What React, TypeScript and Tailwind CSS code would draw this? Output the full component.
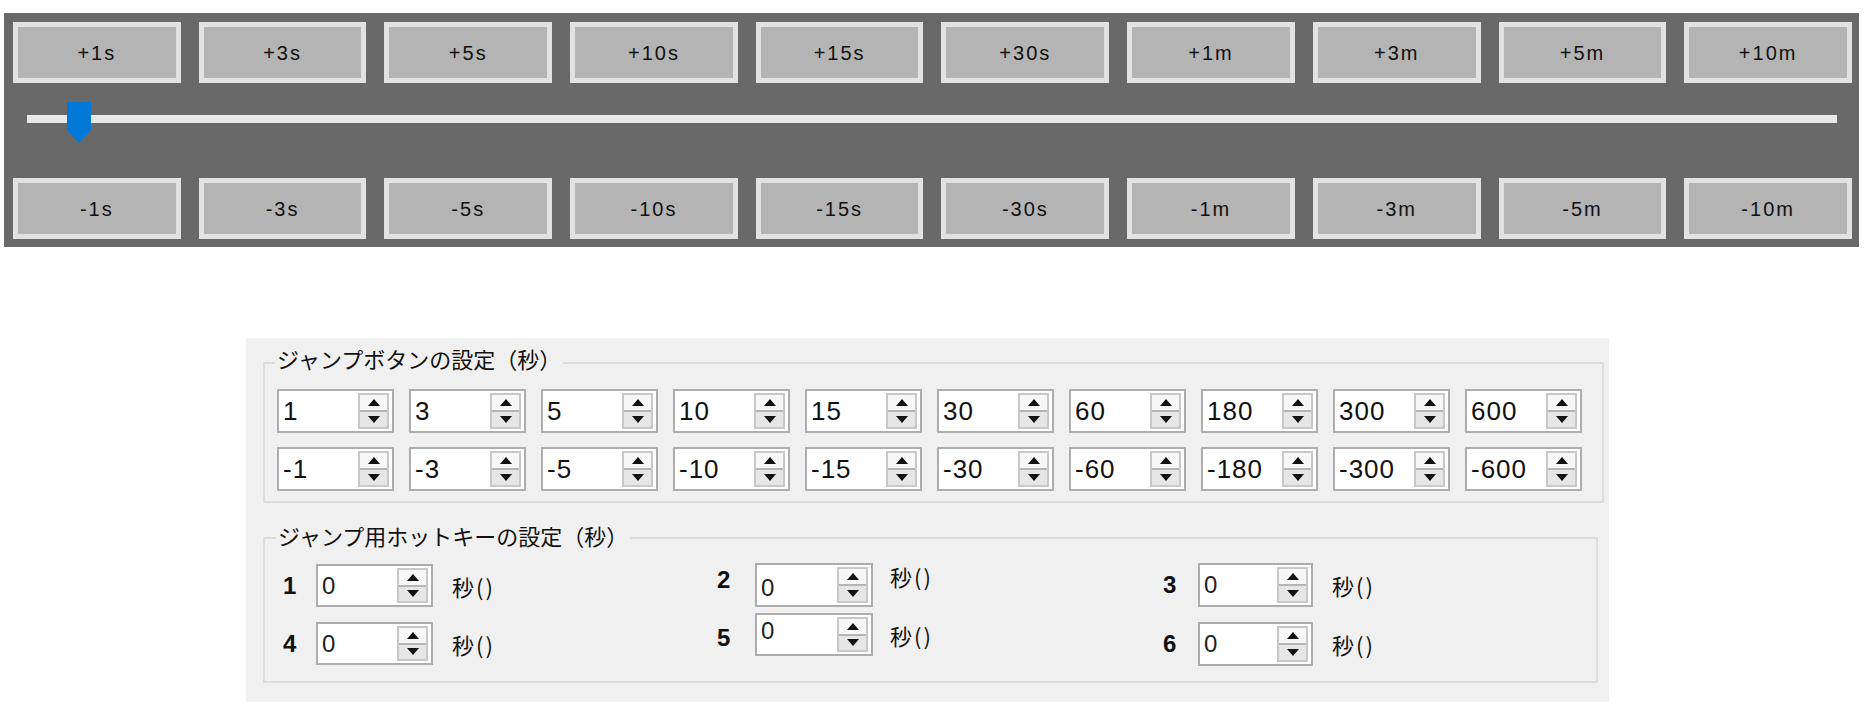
import React from "react";

const plus = ["+1s", "+3s", "+5s", "+10s", "+15s", "+30s", "+1m", "+3m", "+5m", "+10m"];
const minus = ["-1s", "-3s", "-5s", "-10s", "-15s", "-30s", "-1m", "-3m", "-5m", "-10m"];
const row1 = ["1", "3", "5", "10", "15", "30", "60", "180", "300", "600"];
const row2 = ["-1", "-3", "-5", "-10", "-15", "-30", "-60", "-180", "-300", "-600"];

const FONT = { fontFamily: '"Liberation Sans", "Noto Sans CJK JP", sans-serif' };
const JP = { fontFamily: '"Noto Sans CJK JP", "Liberation Sans", sans-serif' };

function JumpButton({ label }: { label: string }) {
  return (
    <div className="h-[61px] border-[5px] border-[#e2e2e2] bg-[#b4b4b4] flex items-center justify-center text-[20px] tracking-[2px] text-[#111] leading-none">
      {label}
    </div>
  );
}

function Arrow({ up }: { up?: boolean }) {
  return (
    <svg width="12" height="7" viewBox="0 0 12 7">
      {up ? <path d="M0 7 L6 0 L12 7 Z" fill="#111" /> : <path d="M0 0 L6 7 L12 0 Z" fill="#111" />}
    </svg>
  );
}

function Spinner({ cls }: { cls: string }) {
  return (
    <div className={"flex flex-col border-2 border-[#c8c8c8] " + cls}>
      <div className="flex-1 flex items-center justify-center bg-[#f7f7f7]">
        <Arrow up />
      </div>
      <div className="h-[2px] bg-[#b5b5b5]" />
      <div className="flex-1 flex items-center justify-center bg-[#e6e6e6]">
        <Arrow />
      </div>
    </div>
  );
}

function SpinBox({ value, size, textCls }: { value: string; size: string; textCls?: string }) {
  return (
    <div className={"flex border-2 border-[#adadad] bg-white shrink-0 " + size}>
      <div className={"flex-1 pl-[4px] text-[#111] leading-none flex " + (textCls ?? "items-center text-[26px] tracking-[1px]")}>
        {value}
      </div>
      <div className="py-[2px] pr-[3px] flex">
        <Spinner cls="w-[31px]" />
      </div>
    </div>
  );
}

function HotCell({
  n,
  labelW,
  size,
  gap,
  labelCls,
  secCls,
  textCls,
}: {
  n: string;
  labelW: string;
  size: string;
  gap: string;
  labelCls?: string;
  secCls?: string;
  textCls?: string;
}) {
  return (
    <div className="flex items-center">
      <div className={"font-bold text-[24px] leading-none text-[#111] " + labelW + " " + (labelCls ?? "")}>{n}</div>
      <SpinBox value="0" size={size} textCls={textCls ?? "items-center text-[24px] pt-[0px] text-[#222]"} />
      <div className={"text-[22px] leading-none text-[#111] tracking-[2px] " + gap + " " + (secCls ?? "")} style={JP}>
        秒()
      </div>
    </div>
  );
}

export default function App() {
  return (
    <div className="w-[1866px] h-[715px] bg-white overflow-hidden pt-[13px]" style={FONT}>
      {/* Top dark panel */}
      <div className="ml-[4px] w-[1855px] h-[234px] bg-[#696969] pt-[9px] pl-[9px] pr-[7px] pb-[8px] flex flex-col">
        <div className="grid grid-cols-10 gap-x-[18px]">
          {plus.map((l) => (
            <JumpButton key={l} label={l} />
          ))}
        </div>
        <div className="h-[96px] pt-[32px] pl-[14px] pr-[15px]">
          <div className="relative h-[8px] bg-[#e7e7e7]">
            <svg className="absolute left-[40px] top-[-13px]" width="24" height="41" viewBox="0 0 24 41">
              <path d="M0 0 H24 V28 L12 41 L0 28 Z" fill="#0078d7" />
            </svg>
          </div>
        </div>
        <div className="grid grid-cols-10 gap-x-[18px]">
          {minus.map((l) => (
            <JumpButton key={l} label={l} />
          ))}
        </div>
      </div>

      {/* Settings panel */}
      <div className="mt-[91px] ml-[246px] w-[1363px] h-[364px] bg-[#f0f0f0] pt-[24px] pl-[17px] pr-[5px] flex flex-col">
        <div className="relative h-[141px] border-2 border-[#dcdcdc] pt-[25px] pl-[12px] flex flex-col gap-[14px]">
          <div className="absolute left-[10px] top-[-19px] px-[2px] bg-[#f0f0f0] text-[22px] leading-[26px] text-[#111]" style={JP}>
            ジャンプボタンの設定（秒）
          </div>
          <div className="flex gap-[15px]">
            {row1.map((v) => (
              <SpinBox key={v} value={v} size="w-[117px] h-[44px]" />
            ))}
          </div>
          <div className="flex gap-[15px]">
            {row2.map((v) => (
              <SpinBox key={v} value={v} size="w-[117px] h-[44px]" />
            ))}
          </div>
        </div>

        <div className="relative mt-[34px] mr-[6px] h-[146px] border-2 border-[#dcdcdc] pt-[25px] pl-[18px] flex">
          <div className="absolute left-[11px] top-[-17px] px-[2px] bg-[#f0f0f0] text-[22px] leading-[26px] text-[#111]" style={JP}>
            ジャンプ用ホットキーの設定（秒）
          </div>
          <div className="w-[434px] flex flex-col gap-[15px]">
            <HotCell n="1" labelW="w-[33px]" size="w-[117px] h-[43px]" gap="ml-[19px]" />
            <HotCell n="4" labelW="w-[33px]" size="w-[117px] h-[43px]" gap="ml-[19px]" />
          </div>
          <div className="w-[446px] flex flex-col gap-[6px] -mt-[1px]">
            <HotCell n="2" labelW="w-[38px]" size="w-[118px] h-[44px]" gap="ml-[17px]" labelCls="mb-[10px]" secCls="mb-[18px]" textCls="items-center text-[24px] pt-[6px] text-[#222]" />
            <HotCell n="5" labelW="w-[38px]" size="w-[118px] h-[43px]" gap="ml-[17px]" labelCls="mt-[6px]" textCls="items-start text-[24px] pt-[4px] text-[#222]" />
          </div>
          <div className="flex flex-col gap-[15px] -mt-[1px]">
            <HotCell n="3" labelW="w-[35px]" size="w-[115px] h-[44px]" gap="ml-[19px]" />
            <HotCell n="6" labelW="w-[35px]" size="w-[115px] h-[44px]" gap="ml-[19px]" />
          </div>
        </div>
      </div>
    </div>
  );
}
